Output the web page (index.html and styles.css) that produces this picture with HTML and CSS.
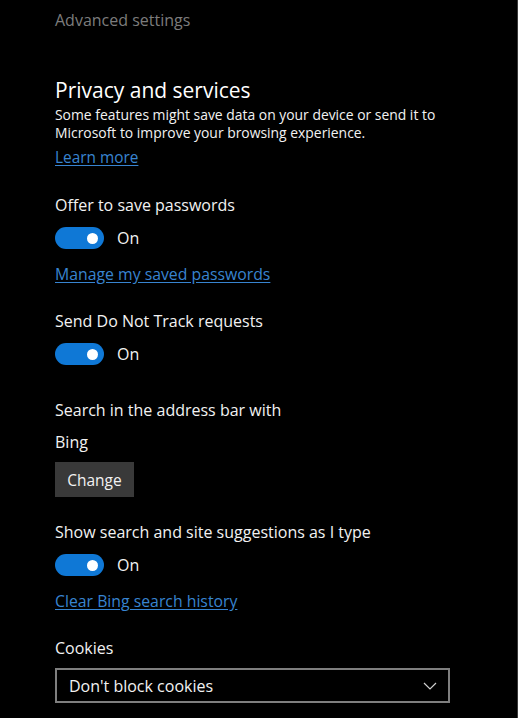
FILE: index.html
```html
<!DOCTYPE html>
<html lang="en">
<head>
    <meta charset="UTF-8">
    <meta name="viewport" content="width=device-width, initial-scale=1.0">
    <title>Advanced settings</title>
    <link rel="stylesheet" href="styles.css">
</head>
<body>
    <div class="panel">
        <div class="crumb">Advanced settings</div>

        <h2 class="section-title">Privacy and services</h2>
        <p class="desc">Some features might save data on your device or send it to Microsoft to improve your browsing experience.</p>
        <a href="#" class="link learn">Learn more</a>

        <div class="label gap-lg">Offer to save passwords</div>
        <div class="toggle-row">
            <span class="toggle"><span class="knob"></span></span>
            <span class="toggle-text">On</span>
        </div>
        <a href="#" class="link after-toggle">Manage my saved passwords</a>

        <div class="label gap-lg">Send Do Not Track requests</div>
        <div class="toggle-row">
            <span class="toggle"><span class="knob"></span></span>
            <span class="toggle-text">On</span>
        </div>

        <div class="label gap-xl">Search in the address bar with</div>
        <div class="label gap-sm">Bing</div>
        <button type="button" class="btn">Change</button>

        <div class="label gap-md">Show search and site suggestions as I type</div>
        <div class="toggle-row">
            <span class="toggle"><span class="knob"></span></span>
            <span class="toggle-text">On</span>
        </div>
        <a href="#" class="link after-toggle">Clear Bing search history</a>

        <div class="label gap-lg">Cookies</div>
        <div class="select">
            <span>Don't block cookies</span>
            <svg class="chevron" width="14" height="8" viewBox="0 0 14 8">
                <path d="M1 1 L7 7 L13 1" fill="none" stroke="#cfcfcf" stroke-width="1.2"/>
            </svg>
        </div>
    </div>
</body>
</html>
```

FILE: styles.css
```css
html {
    background: #000;
}
body {
    margin: 0;
    padding: 0;
    background: #000;
    color: #f2f2f2;
    font-family: "Open Sans", "Noto Sans", Arial, sans-serif;
    box-shadow: inset -1px 0 #3a3a3a;
    min-height: 718px;
}
.panel {
    padding: 8px 0 0 55px;
    width: 395px;
}
.crumb {
    font-size: 16px;
    line-height: 24px;
    color: #7c7c7c;
}
.section-title {
    margin: 43px 0 0;
    font-size: 21px;
    font-weight: normal;
    line-height: 30px;
    color: #fff;
}
.desc {
    margin: 1px 0 0;
    font-size: 13.9px;
    line-height: 18px;
    width: 410px;
}
.link {
    display: block;
    width: max-content;
    font-size: 15.8px;
    line-height: 20px;
    color: #3884d0;
    text-decoration: underline;
    text-underline-offset: 2px;
}
.learn {
    margin-top: 6px;
    font-size: 15.4px;
}
.after-toggle {
    margin-top: 15px;
}
.label {
    font-size: 16px;
    line-height: 22px;
}
.gap-sm { margin-top: 10px; }
.gap-md { margin-top: 24px; }
.gap-lg { margin-top: 26px; }
.gap-xl { margin-top: 34px; }

.toggle-row {
    margin-top: 11px;
    display: flex;
    align-items: center;
    gap: 13px;
    height: 22px;
}
.toggle {
    display: flex;
    align-items: center;
    justify-content: flex-end;
    box-sizing: border-box;
    width: 49px;
    height: 22px;
    padding-right: 6px;
    border-radius: 11px;
    background: #0f78d6;
}
.knob {
    width: 11px;
    height: 11px;
    border-radius: 50%;
    background: #fff;
}
.toggle-text {
    font-size: 16px;
}
.btn {
    display: block;
    margin-top: 9px;
    width: 79px;
    height: 35px;
    padding: 0;
    border: none;
    background: #393939;
    color: #f2f2f2;
    font-family: inherit;
    font-size: 15.5px;
}
.select {
    margin-top: 9px;
    box-sizing: border-box;
    width: 395px;
    height: 35px;
    border: 2px solid #7f7f7f;
    display: flex;
    align-items: center;
    justify-content: space-between;
    padding: 0 11px 0 12px;
    font-size: 16px;
}
.chevron {
    display: block;
}
```
